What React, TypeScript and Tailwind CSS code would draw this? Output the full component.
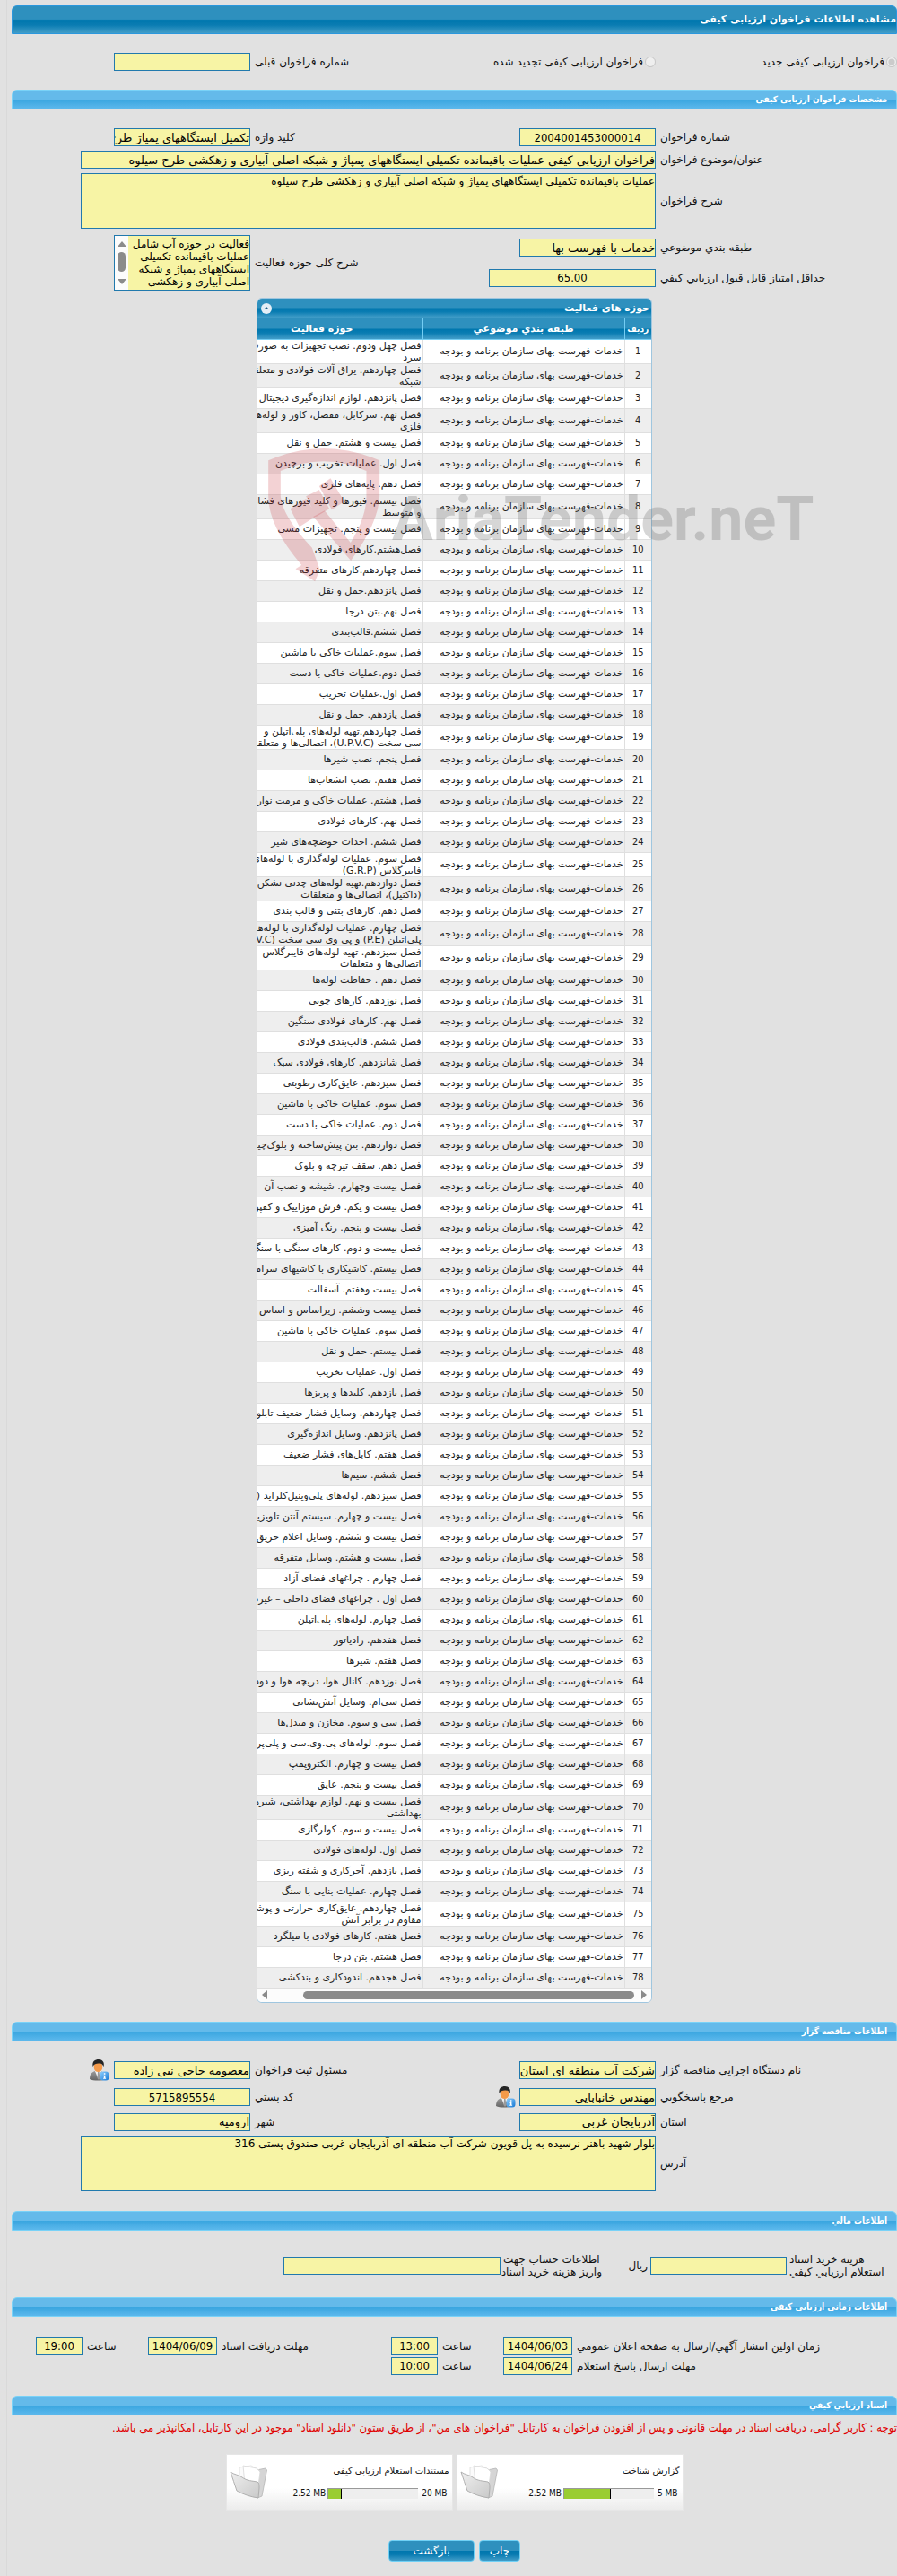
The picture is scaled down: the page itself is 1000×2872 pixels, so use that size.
import { Fragment } from 'react';
import type { ReactNode } from 'react';
import clsx from 'clsx';

const CATEGORY = 'خدمات-فهرست بهای سازمان برنامه و بودجه';

// Long titles are broken by hand, the second line goes after the "\n"
const ACTIVITIES: string[] = [
  'فصل چهل ودوم. نصب تجهیزات به صورت\nسرد',
  'فصل چهاردهم. یراق آلات فولادی و متعلقات\nشبکه',
  'فصل پانزدهم. لوازم اندازه‌گیری دیجیتال',
  'فصل نهم. سرکابل، مفصل، کاور و لوله‌های\nفلزی',
  'فصل بیست و هشتم. حمل و نقل',
  'فصل اول. عملیات تخریب و برچیدن',
  'فصل دهم. پایه‌های فلزی',
  'فصل بیستم. فیوزها و کلید فیوزهای فشار\nو متوسط',
  'فصل بیست و پنجم. تجهیزات مسی',
  'فصل‌هشتم.کارهای فولادی',
  'فصل چهاردهم.کارهای متفرقه',
  'فصل پانزدهم.حمل و نقل',
  'فصل نهم.بتن درجا',
  'فصل ششم.قالب‌بندی',
  'فصل سوم.عملیات خاکی با ماشین',
  'فصل دوم.عملیات خاکی با دست',
  'فصل اول.عملیات تخریب',
  'فصل یازدهم. حمل و نقل',
  'فصل چهاردهم.تهیه لوله‌های پلی‌اتیلن و\nسی سخت (U.P.V.C)، اتصالی‌ها و متعلقات',
  'فصل پنجم. نصب شیرها',
  'فصل هفتم. نصب انشعاب‌ها',
  'فصل هشتم. عملیات خاکی و مرمت نوار',
  'فصل نهم. کارهای فولادی',
  'فصل ششم. احداث حوضچه‌های شیر',
  'فصل سوم. عملیات لوله‌گذاری با لوله‌های\nفایبرگلاس (G.R.P)',
  'فصل دوازدهم.تهیه لوله‌های چدنی نشکن\n(داکتیل)، اتصالی‌ها و متعلقات',
  'فصل دهم. کارهای بتنی و قالب بندی',
  'فصل چهارم. عملیات لوله‌گذاری با لوله‌های\nپلی‌اتیلن (P.E) و پی وی سی سخت (U.P.V.C)',
  'فصل سیزدهم. تهیه لوله‌های فایبرگلاس\nاتصالی‌ها و متعلقات',
  'فصل دهم . حفاظت لوله‌ها',
  'فصل نوزدهم. کارهای چوبی',
  'فصل نهم. کارهای فولادی سنگین',
  'فصل ششم. قالب‌بندی فولادی',
  'فصل شانزدهم. کارهای فولادی سبک',
  'فصل سیزدهم. عایق‌کاری رطوبتی',
  'فصل سوم. عملیات خاکی با ماشین',
  'فصل دوم. عملیات خاکی با دست',
  'فصل دوازدهم. بتن پیش‌ساخته و بلوک‌چینی',
  'فصل دهم. سقف تیرچه و بلوک',
  'فصل بیست وچهارم. شیشه و نصب آن',
  'فصل بیست و یکم. فرش موزاییک و کفپوش‌ها',
  'فصل بیست و پنجم. رنگ آمیزی',
  'فصل بیست و دوم. کارهای سنگی با سنگ',
  'فصل بیستم. کاشیکاری با کاشیهای سرامیکی',
  'فصل بیست وهفتم. آسفالت',
  'فصل بیست وششم. زیراساس و اساس',
  'فصل سوم. عملیات خاکی با ماشین',
  'فصل بیستم. حمل و نقل',
  'فصل اول. عملیات تخریب',
  'فصل یازدهم. کلیدها و پریزها',
  'فصل چهاردهم. وسایل فشار ضعیف تابلویی',
  'فصل پانزدهم. وسایل اندازه‌گیری',
  'فصل هفتم. کابل‌های فشار ضعیف',
  'فصل ششم. سیم‌ها',
  'فصل سیزدهم. لوله‌های پلی‌وینیل‌کلراید (PVC)',
  'فصل بیست و چهارم. سیستم آنتن تلویزیون',
  'فصل بیست و ششم. وسایل اعلام حریق',
  'فصل بیست و هشتم. وسایل متفرقه',
  'فصل چهارم . چراغهای فضای آزاد',
  'فصل اول . چراغهای فضای داخلی – غیرصنعتی',
  'فصل چهارم. لوله‌های پلی‌اتیلن',
  'فصل هفدهم. رادیاتور',
  'فصل هفتم. شیرها',
  'فصل نوزدهم. کانال هوا، دریچه هوا و دودکش',
  'فصل سی‌ام. وسایل آتش‌نشانی',
  'فصل سی و سوم. مخازن و مبدل‌ها',
  'فصل سوم. لوله‌های پی.وی.سی و پلی‌پروپیلن',
  'فصل بیست و چهارم. الکتروپمپ',
  'فصل بیست و پنجم. عایق',
  'فصل بیست و نهم. لوازم بهداشتی، شیرهای\nبهداشتی',
  'فصل بیست و سوم. کولرگازی',
  'فصل اول. لوله‌های فولادی',
  'فصل یازدهم. آجرکاری و شفته ریزی',
  'فصل چهارم. عملیات بنایی با سنگ',
  'فصل چهاردهم. عایق‌کاری حرارتی و پوشش‌های\nمقاوم در برابر آتش',
  'فصل هفتم. کارهای فولادی با میلگرد',
  'فصل هشتم. بتن درجا',
  'فصل هجدهم. اندودکاری و بندکشی',
];

const DOCUMENTS = [
  { title: 'گزارش شناخت', used: 2.52, limit: 5 },
  { title: 'مستندات استعلام ارزيابي کيفي', used: 2.52, limit: 20 },
];

const darkBar = 'bg-[linear-gradient(#2e90be_0%,#2e90be_48%,#0077ae_52%,#0a7cb2_70%,#429dc8_100%)]';
const field = 'rounded-none border border-[#2179ad] bg-[#f7f4a5] text-black outline-none resize-none';
const condensed = "font-['DejaVu_Sans_Condensed','DejaVu_Sans',sans-serif]";
const formGrid = 'grid grid-cols-[269px_152px_minmax(0,1fr)_152px_37px] items-center gap-y-[5px] pl-[77px]';

function SectionBar({ children }: { children: ReactNode }) {
  return (
    <h2
      className={clsx(
        'flex h-[22px] items-center rounded-t-md border border-[#79d2f7] bg-[linear-gradient(#64baea_0%,#64baea_48%,#3aa6e0_52%,#5cb8ec_100%)] pr-2.5 text-[10px] font-bold text-white',
        condensed
      )}
    >
      {children}
    </h2>
  );
}

function Label({ htmlFor, className, children }: { htmlFor: string; className?: string; children: ReactNode }) {
  return (
    <label htmlFor={htmlFor} className={clsx('whitespace-nowrap pl-[5px] text-left', className)}>
      {children}
    </label>
  );
}

function Field({ id, value, className, number }: { id: string; value: string; className?: string; number?: boolean }) {
  return (
    <input
      id={id}
      type="text"
      readOnly
      value={value}
      className={clsx(field, 'h-5 shrink-0 text-[13px]', number && 'text-center', number && condensed, className ?? 'w-[152px]')}
    />
  );
}

function PersonIcon() {
  return (
    <svg viewBox="0 0 24 24" className="size-6 shrink-0" aria-hidden="true">
      <defs>
        <linearGradient id="suit" x1="0" y1="0" x2="0" y2="1">
          <stop offset="0" stopColor="#9a9a9a" />
          <stop offset="1" stopColor="#666" />
        </linearGradient>
        <linearGradient id="badge" x1="0" y1="0" x2="1" y2="1">
          <stop offset="0" stopColor="#8fd0ff" />
          <stop offset="1" stopColor="#1577d3" />
        </linearGradient>
      </defs>
      <path d="M1 22c0-5 2-8 6-9h6c4 1 6 4 6 9-4 2-14 2-18 0z" fill="url(#suit)" />
      <path d="M7 13l3.500 9L14 13z" fill="#f4f4f4" />
      <path d="M10 14h1.500l1 7-1.500 2-1.500-2z" fill="#9b9b9b" />
      <ellipse cx="10.500" cy="8.500" rx="4.800" ry="5.500" fill="#f49a4a" />
      <path d="M4.500 8C3.500 2 7 0 11 0s7 3 5.500 8C15 5 14 4.500 11 4.500S6 5 4.500 8z" fill="#252525" />
      <rect x="12.500" y="13.500" width="10" height="10" rx="3.500" fill="url(#badge)" />
      <path d="M16.800 15.200h1.600v1.500h-1.600zM16.300 17.800h2.100v3h.7v1h-3v-1h.7v-2h-.5z" fill="#fff" />
    </svg>
  );
}

function FolderIcon() {
  return (
    <svg viewBox="0 0 42 40" className="h-10 w-[42px] shrink-0" aria-hidden="true">
      <defs>
        <linearGradient id="folder" x1="0" y1="0" x2="1" y2="1">
          <stop offset="0" stopColor="#efefef" />
          <stop offset="1" stopColor="#c9c9c9" />
        </linearGradient>
      </defs>
      <path d="M30 7l10-2 1.500 2L36 36l-5 2z" fill="#d5d5d5" stroke="#b5b5b5" strokeWidth=".8" />
      <path d="M11 4l13-2 9 5-2 24-20-8z" fill="#fbfbfb" stroke="#dcdcdc" strokeWidth=".8" />
      <path d="M15 2l15 3 4 4-3 22-14-9z" fill="#fff" stroke="#d8d8d8" strokeWidth=".8" />
      <path d="M1 9c4 3 9 3 13 6 5 4 12 4 17 5 2 1 2 4 2 7l-1 11c-8-1-17-4-24-8C6 23 3 16 1 9z" fill="url(#folder)" stroke="#a9a9a9" strokeWidth=".9" />
    </svg>
  );
}

function Watermark() {
  return (
    <svg viewBox="0 0 620 160" className="pointer-events-none absolute left-[13px] top-[164px] h-40 w-[620px]" aria-hidden="true">
      <g fill="#c8323c" fillOpacity=".22" transform="translate(-30.500 -176) scale(.3333)">
        <path d="M92 580Q277 500 464 580V700Q460 790 368 915L242 768 280 748 367 855Q420 770 420 700V615Q277 550 133 615V700Q140 770 238 872L264 945 248 985 183 943 203 930Q92 800 92 700Z" />
        <path d="M165 742L218 708 254 765 196 802ZM218 700L262 678 296 742 252 768ZM262 666L300 640 346 718 304 745Z" />
      </g>
      <text x="138" y="106" fill="#5a5a5a" fillOpacity=".25" className="font-['Roboto',sans-serif] text-[68px] font-bold" direction="ltr">
        AriaTender.neT
      </text>
    </svg>
  );
}

function ActivitiesTable() {
  return (
    <div dir="rtl" className="relative mx-auto w-[441px]">
      <div className="overflow-hidden rounded-md border border-[#9fc6df] bg-white">
        <div className={clsx('flex h-[22px] items-center justify-between border-b border-[#3a94cc] pl-1 pr-0.5', darkBar)}>
          <h3 className="text-[11px] font-bold text-white">حوزه های فعالیت</h3>
          <button type="button" aria-label="بستن" className="flex size-3 items-center justify-center rounded-full bg-[#e3eef6]">
            <svg viewBox="0 0 8 5" className="h-[5px] w-2"><path d="M1 4L4 1l3 3z" fill="#1c5f88" /></svg>
          </button>
        </div>
        <div className="overflow-hidden">
          <table className="w-[479px] table-fixed border-collapse text-[11px] leading-[13px] text-[#222]">
            <colgroup>
              <col className="w-[30px]" />
              <col className="w-[225px]" />
              <col />
            </colgroup>
            <thead>
              <tr className={clsx('h-[23px] text-white', darkBar)}>
                <th className={clsx('whitespace-nowrap border-b border-l border-[#74cdf3] p-0 text-[10px] font-bold', condensed)}>ردیف</th>
                <th className="border-b border-l border-[#74cdf3] p-0 font-bold">طبقه بندي موضوعي</th>
                <th className="border-b border-[#74cdf3] p-0 font-bold">حوزه فعالیت</th>
              </tr>
            </thead>
            <tbody>
              {ACTIVITIES.map((name, i) => (
                <tr key={i} className="h-[23px] border-b border-[#dfdfdf] bg-white even:bg-[#eeeeee]">
                  <td className={clsx('border-l border-[#dfdfdf] p-0 text-center', condensed)}>{i + 1}</td>
                  <td className="whitespace-nowrap border-l border-[#dfdfdf] py-0 pl-0 pr-px">{CATEGORY}</td>
                  <td className="whitespace-pre py-0 pl-0 pr-px">{name}</td>
                </tr>
              ))}
            </tbody>
          </table>
        </div>
        <div dir="ltr" className="flex h-[15px] items-center bg-[#fcfcfc] px-[5px]">
          <svg viewBox="0 0 6 10" className="h-2.5 w-1.5"><path d="M6 0v10L0 5z" fill="#8b8b8b" /></svg>
          <div className="ml-10 mr-2 h-[9px] flex-1 rounded-full bg-[#8b8b8b]" />
          <svg viewBox="0 0 6 10" className="h-2.5 w-1.5"><path d="M0 0v10l6-5z" fill="#8b8b8b" /></svg>
        </div>
      </div>
      <Watermark />
    </div>
  );
}

export default function App() {
  return (
    <div dir="rtl" className="min-h-screen overflow-x-hidden bg-[#e1e1e1] pl-[7px] font-['DejaVu_Sans',sans-serif] text-[12px] leading-[14px] text-[#111]">
      <main className="border-b border-l border-[#d9d9d9] pb-4 pl-[5px] pt-1.5">
        <h1 className={clsx('flex h-8 items-center rounded-t-md border border-[#2a97dd] text-[11px] font-bold text-white', darkBar)}>
          مشاهده اطلاعات فراخوان ارزیابی کیفی
        </h1>

        <div className={clsx(formGrid, 'py-[21px]')}>
          <label className="flex items-center gap-0.5 whitespace-nowrap">
            <input type="radio" name="kind" disabled defaultChecked className="size-3" />
            فراخوان ارزیابی کیفی جدید
          </label>
          <label className="flex items-center gap-0.5 whitespace-nowrap">
            <input type="radio" name="kind" disabled className="size-3" />
            فراخوان ارزیابی کیفی تجدید شده
          </label>
          <Label htmlFor="previous">شماره فراخوان قبلی</Label>
          <Field id="previous" value="" />
        </div>

        <SectionBar>مشخصات فراخوان ارزیابی کیفی</SectionBar>
        <div className={clsx(formGrid, 'pt-[21px]')}>
          <Label htmlFor="callNo">شماره فراخوان</Label>
          <Field id="callNo" value="2004001453000014" number />
          <Label htmlFor="keyword">کلید واژه</Label>
          <Field id="keyword" value="تکمیل ایستگاههای پمپاژ طرح سیلوه" />
          <span />
          <Label htmlFor="subject">عنوان/موضوع فراخوان</Label>
          <Field
            id="subject"
            className="col-span-4 w-full"
            value="فراخوان ارزیابی کیفی عملیات باقیمانده تکمیلی ایستگاههای پمپاژ و شبکه اصلی آبیاری و زهکشی طرح سیلوه"
          />
          <Label htmlFor="desc">شرح فراخوان</Label>
          <textarea
            id="desc"
            readOnly
            className={clsx(field, 'col-span-4 h-[62px] pt-px')}
            value="عملیات باقیمانده تکمیلی ایستگاههای پمپاژ و شبکه اصلی آبیاری و زهکشی طرح سیلوه"
          />
        </div>
        <div className={clsx(formGrid, 'pb-2 pt-[7px]')}>
          <Label htmlFor="category">طبقه بندي موضوعي</Label>
          <Field id="category" value="خدمات با فهرست بها" />
          <Label htmlFor="scope" className="row-span-2">شرح کلی حوزه فعالیت</Label>
          <div className="row-span-2 flex h-[62px] w-[152px] border border-[#2179ad] bg-[#f7f4a5]">
            <textarea
              id="scope"
              readOnly
              className="min-w-0 flex-1 resize-none overflow-hidden whitespace-pre pt-0.5 leading-[14px] text-black outline-none"
              value={'فعالیت در حوزه آب شامل\nعملیات باقیمانده تکمیلی\nایستگاههای پمپاژ و شبکه\nاصلی آبیاری و زهکشی'}
            />
            <div className="flex w-[15px] flex-col items-center bg-[#fcfcfc] py-1.5">
              <svg viewBox="0 0 10 6" className="h-1.5 w-2.5"><path d="M0 6h10L5 0z" fill="#8b8b8b" /></svg>
              <div className="mb-2 mt-1.5 w-[9px] flex-1 rounded-full bg-[#8b8b8b]" />
              <svg viewBox="0 0 10 6" className="h-1.5 w-2.5"><path d="M0 0h10L5 6z" fill="#8b8b8b" /></svg>
            </div>
          </div>
          <span className="row-span-2" />
          <Label htmlFor="score">حداقل امتیاز قابل قبول ارزیابي کیفي</Label>
          <Field id="score" value="65.00" number className="w-[186px]" />
        </div>

        <ActivitiesTable />

        <div className="h-[21px]" />
        <SectionBar>اطلاعات مناقصه گزار</SectionBar>
        <div className={clsx(formGrid, 'pb-[22px] pt-5')}>
          <Label htmlFor="org">نام دستگاه اجرایی مناقصه گزار</Label>
          <Field id="org" value="شرکت آب منطقه ای استان آذربایجان غربی" />
          <Label htmlFor="registrar">مسئول ثبت فراخوان</Label>
          <Field id="registrar" value="معصومه حاجی نبی زاده" />
          <button type="button" aria-label="اطلاعات تماس" className="mr-1 h-[25px]"><PersonIcon /></button>

          <Label htmlFor="contact">مرجع پاسخگويي</Label>
          <div className="flex h-[25px] items-center gap-[3px]">
            <Field id="contact" value="مهندس خانبابایی" />
            <button type="button" aria-label="اطلاعات تماس" className="shrink-0"><PersonIcon /></button>
          </div>
          <Label htmlFor="postal">کد پستي</Label>
          <Field id="postal" value="5715895554" number />
          <span />

          <Label htmlFor="province">استان</Label>
          <Field id="province" value="آذربایجان غربی" />
          <Label htmlFor="city">شهر</Label>
          <Field id="city" value="ارومیه" />
          <span />

          <Label htmlFor="address">آدرس</Label>
          <textarea
            id="address"
            readOnly
            className={clsx(field, 'col-span-4 h-[62px] pt-px')}
            value="بلوار شهید باهنر نرسیده به پل قویون شرکت آب منطقه ای آذربایجان غربی صندوق پستی 316"
          />
        </div>

        <SectionBar>اطلاعات مالي</SectionBar>
        <div className="flex items-center pb-[21px] pr-[11px] pt-[25px]">
          <label htmlFor="price" className="ml-[3px] w-[109px] whitespace-nowrap text-left">
            هزینه خرید اسناد<br />استعلام ارزیابي کیفي
          </label>
          <Field id="price" value="" />
          <span className="mr-[3px] w-[51px]">ریال</span>
          <label htmlFor="account" className="ml-[3px] w-[110px] whitespace-nowrap text-left">
            اطلاعات حساب جهت<br />واریز هزینه خرید اسناد
          </label>
          <Field id="account" value="" className="w-[242px]" />
        </div>

        <SectionBar>اطلاعات زمانی ارزیابی کیفی</SectionBar>
        <div className="grid grid-cols-[minmax(0,1fr)_77px_73px_52px_194px_77px_73px_52px] items-center gap-y-0.5 py-[23px] pl-[27px]">
          {[
            ['publish', 'زمان اولین انتشار آگهي/ارسال به صفحه اعلان عمومي', '1404/06/03', '13:00'],
            ['receive', 'مهلت دریافت اسناد', '1404/06/09', '19:00'],
            ['reply', 'مهلت ارسال پاسخ استعلام', '1404/06/24', '10:00'],
          ].map(([id, label, date, time]) => (
            <Fragment key={id}>
              <Label htmlFor={`${id}Date`}>{label}</Label>
              <Field id={`${id}Date`} value={date} number className="w-[77px]" />
              <Label htmlFor={`${id}Time`}>ساعت</Label>
              <Field id={`${id}Time`} value={time} number className="w-[52px]" />
            </Fragment>
          ))}
        </div>

        <SectionBar>اسناد ارزيابي کيفي</SectionBar>
        <p className={clsx('whitespace-nowrap pt-[5px] text-[13px] leading-[18px] text-[#e00000]', condensed)}>
          توجه : کاربر گرامی، دریافت اسناد در مهلت قانونی و پس از افزودن فراخوان به کارتابل "فراخوان های من"، از طریق ستون "دانلود اسناد" موجود در این کارتابل، امکانپذیر می باشد.
        </p>
        <div className="mt-5 flex justify-center gap-1">
          {DOCUMENTS.map((doc) => (
            <div key={doc.title} className="flex h-[63px] w-[253px] items-center justify-between border border-[#e6e6e6] bg-[linear-gradient(#fff_60%,#ececec)] px-[3px]">
              <div className="flex flex-col gap-3">
                <h3 className="text-[10px]">{doc.title}</h3>
                <div dir="ltr" className={clsx('flex items-center justify-end gap-0.5 pr-0.5 text-[10px] leading-3', condensed)}>
                  <span>{doc.used} MB</span>
                  <div className="h-3 w-[101px] border-l border-t border-[#999] bg-[#eee]">
                    <div className="h-full border-r border-black bg-[#9acd32]" style={{ width: `${Math.round((doc.used / doc.limit) * 100) + 2}%` }} />
                  </div>
                  <span className="pl-0.5">{doc.limit} MB</span>
                </div>
              </div>
              <FolderIcon />
            </div>
          ))}
        </div>
        <div className="mt-[33px] flex justify-center gap-[5px] text-white">
          <button type="button" className={clsx('h-6 w-[46px] rounded border border-[#6fd0f5]', darkBar)}>چاپ</button>
          <button type="button" className={clsx('h-6 w-24 rounded border border-[#6fd0f5]', darkBar)}>بازگشت</button>
        </div>
      </main>
    </div>
  );
}
